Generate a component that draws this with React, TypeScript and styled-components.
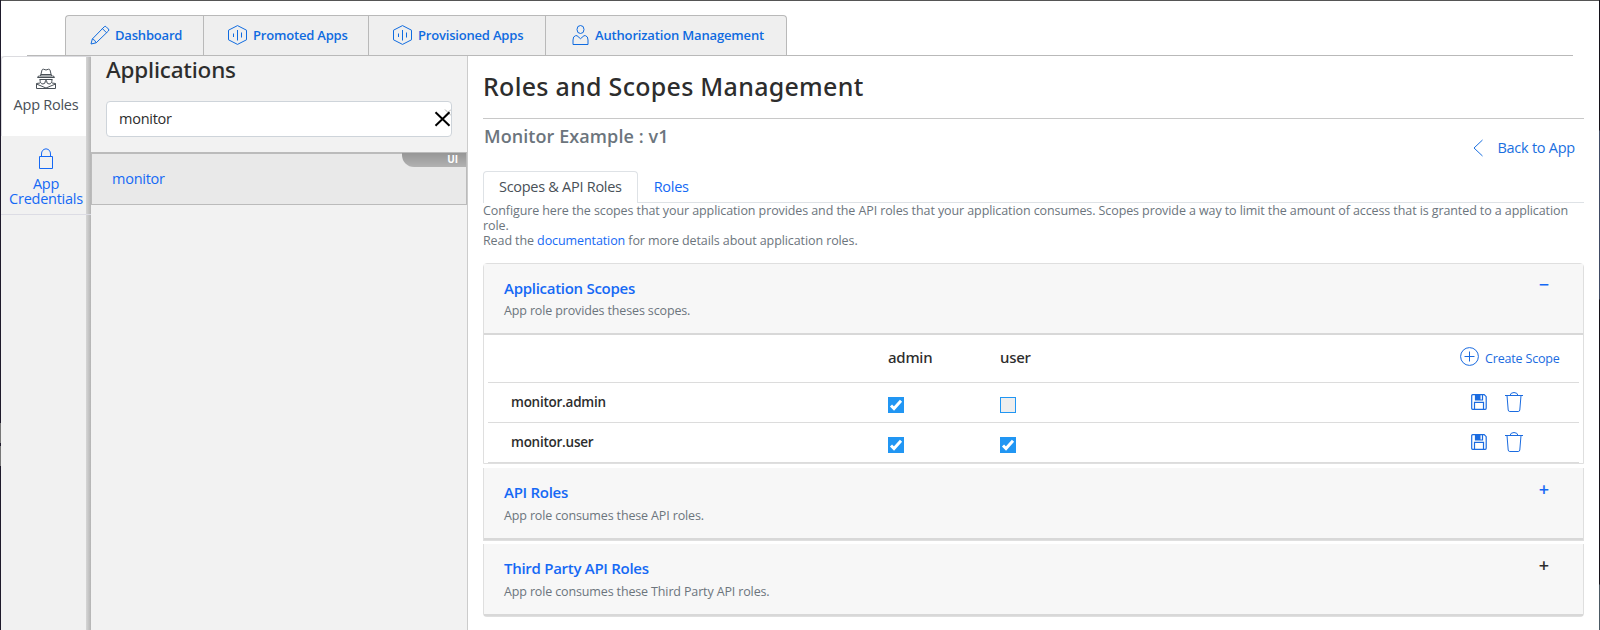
import React from "react";
import styled, { createGlobalStyle, css } from "styled-components";

const GlobalStyle = createGlobalStyle`
  * { box-sizing: border-box; }
  body {
    margin: 0;
    background: #fff;
    color: #2d2d2d;
    font-family: "Open Sans", "Noto Sans", sans-serif;
    font-size: 14.5px;
    letter-spacing: -0.25px;
    overflow: hidden;
  }
`;

const BLUE = "#1569f5";
const HEADING_FONT = '"Noto Sans", "Open Sans", sans-serif';

const Window = styled.div`
  display: grid;
  grid-template-columns: 1px 1fr 1px;
  width: 1600px;
  height: 630px;
`;

const LeftEdge = styled.div`
  background: linear-gradient(#1e1a2b 423px, #777 423px 443px, #1e1a2b 443px 446px, #777 446px 466px, #1e1a2b 466px);
`;

const RightEdge = styled.div`
  background: linear-gradient(#14121a 130px, #404a63 131px 299px, #14121a 300px 584px, #4c5963 585px);
`;

const Content = styled.div`
  display: flex;
  flex-direction: column;
  min-width: 0;
  border-top: 1px solid #555;
`;

const TopBar = styled.nav`
  display: flex;
  flex: none;
  height: 55px;
  margin: 0 26px;
  padding: 14px 0 0 38px;
  border-bottom: 1px solid #b9b9b9;
`;

const TopTab = styled.a<{ $width: number }>`
  display: flex;
  align-items: center;
  gap: 5px;
  width: ${(p) => p.$width}px;
  padding: 0 0 1px 24px;
  border: 1px solid #b9b9b9;
  border-width: 1px 0 0 1px;
  background: #efefef;
  color: #0f6be0;
  font-size: 13px;
  font-weight: 600;
  letter-spacing: -0.19px;
  white-space: nowrap;
  &:first-child { border-top-left-radius: 4px; }
  &:last-child { border-right-width: 1px; border-top-right-radius: 4px; letter-spacing: -0.16px; }
`;

const Icon = styled.svg<{ $size?: number }>`
  flex: none;
  display: block;
  width: ${(p) => p.$size ?? 20}px;
  height: ${(p) => p.$size ?? 20}px;
  fill: none;
  stroke: currentColor;
`;

const Body = styled.div`
  display: flex;
  flex: 1;
  min-height: 0;
`;

const SideBar = styled.aside`
  width: 90px;
  flex: none;
  background: linear-gradient(to right, transparent 85px, #d6d6d6 85px, #b4b4b4 90px), #f1f1f1;
`;

const SideItem = styled.a<{ $active?: boolean }>`
  display: flex;
  flex-direction: column;
  align-items: center;
  gap: ${(p) => (p.$active ? 7 : 6)}px;
  height: ${(p) => (p.$active ? 80 : 79)}px;
  padding: ${(p) => (p.$active ? "11px 1px 0 0" : "12px 0 0")};
  line-height: 15px;
  text-align: center;
  ${(p) =>
    p.$active
      ? css`
          border: 1px solid #dcdce0;
          border-width: 1px 0 0 1px;
          border-top-left-radius: 4px;
          background: linear-gradient(to right, #fff 84px, #d6d6d6 84px, #b4b4b4 89px);
          color: #495057;
        `
      : css`
          border-bottom: 1px solid #dcdce4;
          color: ${BLUE};
        `}
`;

const AppPanel = styled.section`
  width: 377px;
  flex: none;
  border-right: 1px solid #ccc;
  background: #f2f2f2;
`;

const PanelTitle = styled.h2`
  margin: 0 15px;
  padding-top: 2px;
  height: 45px;
  font-family: ${HEADING_FONT};
  font-size: 22.5px;
  line-height: 24px;
  font-weight: 500;
  letter-spacing: -0.2px;
`;

const SearchBox = styled.div`
  display: flex;
  align-items: center;
  justify-content: space-between;
  height: 36px;
  margin: 0 15px 15px;
  padding: 0 0 1px 12px;
  border: 1px solid #ced4da;
  border-radius: 4px;
  background: #fff;
  line-height: 19px;
`;

const AppItem = styled.a`
  position: relative;
  display: flex;
  align-items: center;
  height: 53px;
  padding: 0 20px 2px;
  border: 1px solid #bbb;
  border-top-width: 2px;
  background: #e9e9e9;
  color: ${BLUE};
`;

const TypeBadge = styled.span`
  position: absolute;
  top: -1px;
  right: 0;
  width: 64px;
  height: 14px;
  padding-right: 8px;
  border-bottom-left-radius: 12px;
  background: linear-gradient(#969696, #b2b2b2);
  color: #fff;
  font-size: 10px;
  line-height: 13px;
  font-weight: 700;
  letter-spacing: 0;
  text-align: right;
`;

const Main = styled.main`
  flex: 1;
  min-width: 0;
  padding: 15px 15px 0;
`;

const PageTitle = styled.h1`
  height: 48px;
  margin: 0;
  border-bottom: 1px solid #c8c8c8;
  font-family: ${HEADING_FONT};
  font-size: 25px;
  line-height: 30px;
  font-weight: 500;
  letter-spacing: 0.28px;
`;

const SubHeader = styled.div`
  display: flex;
  justify-content: space-between;
  height: 52px;
`;

const AppName = styled.h3`
  margin: 5px 0 0 1px;
  color: #6c757d;
  font-size: 18px;
  line-height: 24px;
  font-weight: 600;
  letter-spacing: 0.08px;
`;

const BackLink = styled.a`
  display: flex;
  align-items: center;
  gap: 10px;
  height: 20px;
  margin: 19px 9px 0 0;
  color: #1a6fe0;
  line-height: 20px;
`;

const Tabs = styled.div`
  display: flex;
  height: 32px;
  border-bottom: 1px solid #dee2e6;
`;

const Tab = styled.a<{ $active?: boolean }>`
  height: 32px;
  padding: 0 15px;
  border: 1px solid ${(p) => (p.$active ? "#dee2e6" : "transparent")};
  border-bottom: 0;
  border-radius: 4px 4px 0 0;
  background: ${(p) => (p.$active ? "#fff" : "none")};
  color: ${(p) => (p.$active ? "#495057" : BLUE)};
  letter-spacing: -0.28px;
  line-height: 29px;
`;

const Description = styled.p`
  margin: 0 0 15px;
  color: #6c757d;
  font-size: 12.5px;
  line-height: 15px;
  letter-spacing: -0.095px;
`;

const DocLink = styled.a`
  color: ${BLUE};
`;

const Accordion = styled.div`
  display: flex;
  flex-direction: column;
`;

const Card = styled.section<{ $open?: boolean }>`
  border: 1px solid #dfdfdf;
  ${(p) => (p.$open ? "border-radius: 4px 4px 0 0; margin-bottom: 4px;" : "border-top: 0; margin-bottom: 3px;")}
  &:last-child { border-radius: 0 0 4px 4px; }
`;

const CardHeader = styled.header<{ $open?: boolean }>`
  display: flex;
  justify-content: space-between;
  height: ${(p) => (p.$open ? 71 : 72)}px;
  padding: 16px 33px 0 20px;
  border-bottom: 2px solid #d8d8d8;
  background: #f7f7f7;
`;

const CardText = styled.div<{ $open?: boolean }>`
  display: flex;
  flex-direction: column;
  gap: ${(p) => (p.$open ? 7 : 8)}px;
`;

const CardTitle = styled.h4`
  margin: 0;
  color: ${BLUE};
  font-size: 15px;
  line-height: 16px;
  font-weight: 600;
  letter-spacing: -0.28px;
`;

const CardNote = styled.small`
  color: #6c757d;
  font-size: 12.5px;
  line-height: 16px;
  letter-spacing: -0.14px;
`;

const Toggle = styled.span<{ $dark?: boolean; $open?: boolean }>`
  width: 12px;
  margin-top: ${(p) => (p.$open ? -2 : -1)}px;
  color: ${(p) => (p.$dark ? "#2d2d2d" : BLUE)};
  font-size: 18px;
  line-height: 12px;
  font-weight: 600;
  letter-spacing: 0;
  text-align: center;
`;

const Table = styled.div`
  margin: 0 4px;
`;

const Row = styled.div<{ $head?: boolean }>`
  display: grid;
  grid-template-columns: 400px 112px 460px 1fr;
  align-items: center;
  height: ${(p) => (p.$head ? 48 : 40)}px;
  padding-bottom: ${(p) => (p.$head ? 3 : 1)}px;
  border-bottom: 1px solid #dcdcdc;
`;

const RoleHead = styled.span`
  font-family: ${HEADING_FONT};
  font-size: 15px;
  font-weight: 500;
  letter-spacing: -0.25px;
  line-height: 20px;
`;

const ScopeName = styled.span`
  padding-left: 23px;
  font-size: 13.5px;
  line-height: 20px;
  font-weight: 600;
`;

const Check = styled.span<{ $on: boolean }>`
  display: block;
  width: 16px;
  height: 16px;
  margin-top: 6px;
  border: 1px solid #2196f3;
  background: ${(p) => (p.$on ? "#2196f3" : "#eee")};
  color: #fff;
`;

const Actions = styled.span`
  display: flex;
  align-items: center;
  gap: 17px;
  padding-left: 11px;
  color: #1a6be0;
`;

const CreateLink = styled.a`
  display: flex;
  align-items: center;
  gap: 5px;
  color: #1a6be0;
  font-size: 12.5px;
  letter-spacing: -0.17px;
  line-height: 18px;
`;

const CreateLabel = styled.span`
  padding-top: 3px;
`;

const PencilIcon = () => (
  <Icon viewBox="0 0 20 20" strokeWidth="1">
    <path d="M1 19l1.3-5L14.2 1.8q1-1 2 0l2.2 2.2q1 1 0 2L6.2 17.8zM12.4 3.6l4.2 4.2M2.3 14q2.6.6 3.9 3.8" />
  </Icon>
);

const HexIcon = () => (
  <Icon viewBox="0 0 20 20" strokeWidth="1">
    <path d="M9.500 .6l9 4.6v9.6l-9 4.600-9-4.600V5.200z" />
    <path d="M5.500 8.500v3.500M9.500 5v10.500M13.500 7.500v5" />
  </Icon>
);

const UserIcon = () => (
  <Icon viewBox="0 0 20 20" strokeWidth="1">
    <ellipse cx="10.500" cy="4.500" rx="3.500" ry="4" />
    <path d="M7 10.700l3.500 3 3.500-3h1.500q2.500.5 2.500 4.300v4.500H3V15q0-3.800 2.500-4.300z" />
  </Icon>
);

const SpyIcon = () => (
  <Icon $size={22} viewBox="0 0 22 22" strokeWidth="1">
    <path d="M5.500 8L7 2q.3-.9 1.500-.8L11 2l2.500-.8Q14.700 1.100 15 2l1.500 6M5.800 6.500h10.400M2.500 9.500q0-1.500 2-1.500h13q2 0 2 1.500z" />
    <path d="M4.500 11.500h13M5 11.500q0 4.500 3 4.500 2.500 0 2.500-3.500h1q0 3.500 2.500 3.500 3 0 3-4.500" />
    <path d="M5 15l-3.500.5v5h19v-5L17 15M1.500 16l9.500 4 9.500-4" />
  </Icon>
);

const LockIcon = () => (
  <Icon $size={22} viewBox="0 0 22 22" strokeWidth="1">
    <path d="M4.500 8.500h13v12h-13zM6.500 8.500V6q0-4.500 4.500-5.200Q15.500 1.500 15.500 6v2.500" />
  </Icon>
);

const ClearIcon = () => (
  <Icon $size={20} viewBox="0 0 20 20">
    <path d="M14 .5l6 6M20 .5l-6 6" stroke="#999" strokeWidth="0.8" />
    <path d="M4.500 3.300l14 13.500M18.500 3.300L4.500 16.800" stroke="#000" strokeWidth="2" />
  </Icon>
);

const BackIcon = () => (
  <Icon $size={18} viewBox="0 0 18 18" strokeWidth="1">
    <path d="M13.500 1L5 9l8.500 8" />
  </Icon>
);

const PlusCircleIcon = () => (
  <Icon viewBox="0 0 20 20" strokeWidth="1">
    <circle cx="9.500" cy="9.500" r="8.900" />
    <path d="M9.500 4.500v10M4.500 9.500h10" />
  </Icon>
);

const SaveIcon = () => (
  <Icon $size={16} viewBox="0 0 16 16" strokeWidth="1.200">
    <path d="M.7 1.700q0-1 1-1h11.500l2 2v11.600q0 1-1 1H1.700q-1 0-1-1zM3.500 15V8.300h9V15M4.500 1v5h7V1" />
    <path d="M5 1h4.500v5H5z" fill="currentColor" stroke="none" />
  </Icon>
);

const TrashIcon = () => (
  <Icon viewBox="0 0 20 20" strokeWidth="1">
    <path d="M1 3.500h18M6 3.500q.5-3 4-3t4 3M3 3.500L4.200 18q.2 1.500 1.600 1.500h8.400q1.400 0 1.600-1.500L17 3.500" />
  </Icon>
);

const TickIcon = () => (
  <Icon $size={14} viewBox="0 0 14 14" strokeWidth="3">
    <path d="M2 7.500l3 3L12 2.800" />
  </Icon>
);

const topTabs = [
  { label: "Dashboard", width: 138, icon: <PencilIcon /> },
  { label: "Promoted Apps", width: 165, icon: <HexIcon /> },
  { label: "Provisioned Apps", width: 177, icon: <HexIcon /> },
  { label: "Authorization Management", width: 242, icon: <UserIcon /> },
];

const scopes = [
  { name: "monitor.admin", admin: true, user: false },
  { name: "monitor.user", admin: true, user: true },
];

const CheckBox = ({ on }: { on: boolean }) => (
  <Check $on={on} role="checkbox" aria-checked={on}>
    {on && <TickIcon />}
  </Check>
);

type HeaderProps = { title: string; note: string; open?: boolean; dark?: boolean };

const SectionHeader = ({ title, note, open, dark }: HeaderProps) => (
  <CardHeader $open={open}>
    <CardText $open={open}>
      <CardTitle>{title}</CardTitle>
      <CardNote>{note}</CardNote>
    </CardText>
    <Toggle $dark={dark} $open={open}>
      {open ? "−" : "+"}
    </Toggle>
  </CardHeader>
);

export default function App() {
  return (
    <Window>
      <GlobalStyle />
      <LeftEdge />
      <Content>
        <TopBar>
          {topTabs.map((t) => (
            <TopTab key={t.label} $width={t.width}>
              {t.icon}
              {t.label}
            </TopTab>
          ))}
        </TopBar>
        <Body>
          <SideBar>
            <SideItem $active>
              <SpyIcon />
              App Roles
            </SideItem>
            <SideItem>
              <LockIcon />
              App Credentials
            </SideItem>
          </SideBar>
          <AppPanel>
            <PanelTitle>Applications</PanelTitle>
            <SearchBox>
              monitor
              <ClearIcon />
            </SearchBox>
            <AppItem>
              monitor
              <TypeBadge>UI</TypeBadge>
            </AppItem>
          </AppPanel>
          <Main>
            <PageTitle>Roles and Scopes Management</PageTitle>
            <SubHeader>
              <AppName>Monitor Example : v1</AppName>
              <BackLink>
                <BackIcon />
                Back to App
              </BackLink>
            </SubHeader>
            <Tabs>
              <Tab $active>Scopes &amp; API Roles</Tab>
              <Tab>Roles</Tab>
            </Tabs>
            <Description>
              Configure here the scopes that your application provides and the API roles that your application
              consumes. Scopes provide a way to limit the amount of access that is granted to a application role.
              <br />
              Read the <DocLink>documentation</DocLink> for more details about application roles.
            </Description>
            <Accordion>
              <Card $open>
                <SectionHeader open title="Application Scopes" note="App role provides theses scopes." />
                <Table>
                  <Row $head>
                    <span />
                    <RoleHead>admin</RoleHead>
                    <RoleHead>user</RoleHead>
                    <CreateLink>
                      <PlusCircleIcon />
                      <CreateLabel>Create Scope</CreateLabel>
                    </CreateLink>
                  </Row>
                  {scopes.map((s) => (
                    <Row key={s.name}>
                      <ScopeName>{s.name}</ScopeName>
                      <CheckBox on={s.admin} />
                      <CheckBox on={s.user} />
                      <Actions>
                        <SaveIcon />
                        <TrashIcon />
                      </Actions>
                    </Row>
                  ))}
                </Table>
              </Card>
              <Card>
                <SectionHeader title="API Roles" note="App role consumes these API roles." />
              </Card>
              <Card>
                <SectionHeader dark title="Third Party API Roles" note="App role consumes these Third Party API roles." />
              </Card>
            </Accordion>
          </Main>
        </Body>
      </Content>
      <RightEdge />
    </Window>
  );
}
